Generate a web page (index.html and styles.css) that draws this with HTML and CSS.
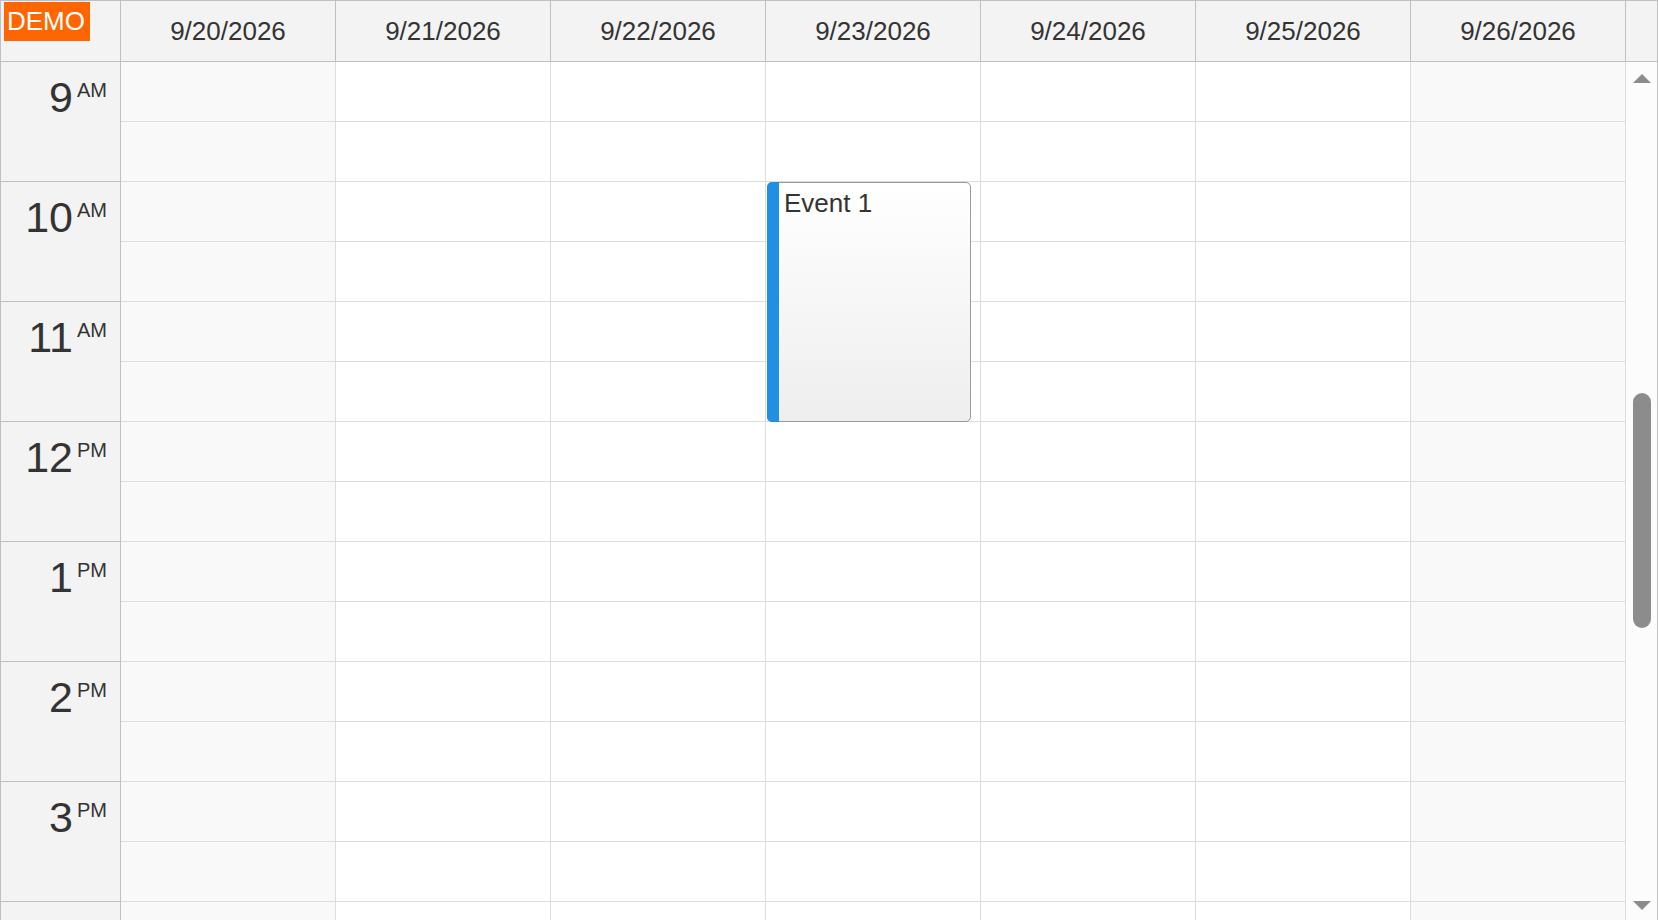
FILE: index.html
```html
<!DOCTYPE html>
<html>
<head>
<meta charset="utf-8">
<title>Calendar</title>
<link rel="stylesheet" href="styles.css">
</head>
<body>
<div class="cal">
  <div class="demo">DEMO</div>
  <div class="head">
    <div class="corner"></div>
    <div class="colhead">9/20/2026</div>
    <div class="colhead">9/21/2026</div>
    <div class="colhead">9/22/2026</div>
    <div class="colhead">9/23/2026</div>
    <div class="colhead">9/24/2026</div>
    <div class="colhead">9/25/2026</div>
    <div class="colhead">9/26/2026</div>
    <div class="headspacer"></div>
  </div>
  <div class="body">
    <div class="rowheaders">
      <div class="hour"><span class="num">9</span><span class="ampm">AM</span></div>
      <div class="hour"><span class="num">10</span><span class="ampm">AM</span></div>
      <div class="hour"><span class="num">11</span><span class="ampm">AM</span></div>
      <div class="hour"><span class="num">12</span><span class="ampm">PM</span></div>
      <div class="hour"><span class="num">1</span><span class="ampm">PM</span></div>
      <div class="hour"><span class="num">2</span><span class="ampm">PM</span></div>
      <div class="hour"><span class="num">3</span><span class="ampm">PM</span></div>
      <div class="hour"><span class="num">4</span><span class="ampm">PM</span></div>
      <div class="hour"><span class="num">5</span><span class="ampm">PM</span></div>
    </div>
    <div class="day weekend">
      <div class="cell"></div><div class="cell"></div><div class="cell"></div><div class="cell"></div><div class="cell"></div><div class="cell"></div><div class="cell"></div><div class="cell"></div><div class="cell"></div><div class="cell"></div><div class="cell"></div><div class="cell"></div><div class="cell"></div><div class="cell"></div><div class="cell"></div><div class="cell"></div><div class="cell"></div><div class="cell"></div>
    </div>
    <div class="day">
      <div class="cell"></div><div class="cell"></div><div class="cell"></div><div class="cell"></div><div class="cell"></div><div class="cell"></div><div class="cell"></div><div class="cell"></div><div class="cell"></div><div class="cell"></div><div class="cell"></div><div class="cell"></div><div class="cell"></div><div class="cell"></div><div class="cell"></div><div class="cell"></div><div class="cell"></div><div class="cell"></div>
    </div>
    <div class="day">
      <div class="cell"></div><div class="cell"></div><div class="cell"></div><div class="cell"></div><div class="cell"></div><div class="cell"></div><div class="cell"></div><div class="cell"></div><div class="cell"></div><div class="cell"></div><div class="cell"></div><div class="cell"></div><div class="cell"></div><div class="cell"></div><div class="cell"></div><div class="cell"></div><div class="cell"></div><div class="cell"></div>
    </div>
    <div class="day">
      <div class="cell"></div><div class="cell"></div><div class="cell"></div><div class="cell"></div><div class="cell"></div><div class="cell"></div><div class="cell"></div><div class="cell"></div><div class="cell"></div><div class="cell"></div><div class="cell"></div><div class="cell"></div><div class="cell"></div><div class="cell"></div><div class="cell"></div><div class="cell"></div><div class="cell"></div><div class="cell"></div>
      <div class="event">
        <div class="event-bar"></div>
        <div class="event-text">Event 1</div>
      </div>
    </div>
    <div class="day">
      <div class="cell"></div><div class="cell"></div><div class="cell"></div><div class="cell"></div><div class="cell"></div><div class="cell"></div><div class="cell"></div><div class="cell"></div><div class="cell"></div><div class="cell"></div><div class="cell"></div><div class="cell"></div><div class="cell"></div><div class="cell"></div><div class="cell"></div><div class="cell"></div><div class="cell"></div><div class="cell"></div>
    </div>
    <div class="day">
      <div class="cell"></div><div class="cell"></div><div class="cell"></div><div class="cell"></div><div class="cell"></div><div class="cell"></div><div class="cell"></div><div class="cell"></div><div class="cell"></div><div class="cell"></div><div class="cell"></div><div class="cell"></div><div class="cell"></div><div class="cell"></div><div class="cell"></div><div class="cell"></div><div class="cell"></div><div class="cell"></div>
    </div>
    <div class="day weekend">
      <div class="cell"></div><div class="cell"></div><div class="cell"></div><div class="cell"></div><div class="cell"></div><div class="cell"></div><div class="cell"></div><div class="cell"></div><div class="cell"></div><div class="cell"></div><div class="cell"></div><div class="cell"></div><div class="cell"></div><div class="cell"></div><div class="cell"></div><div class="cell"></div><div class="cell"></div><div class="cell"></div>
    </div>
    <div class="scrollbar">
      <div class="arrow-up"></div>
      <div class="thumb"></div>
      <div class="arrow-down"></div>
    </div>
  </div>
</div>
</body>
</html>
```

FILE: styles.css
```css
html, body {
  margin: 0;
  padding: 0;
  background: #ffffff;
  overflow: hidden;
}

body {
  width: 1658px;
  height: 920px;
  font-family: "Liberation Sans", Arial, sans-serif;
  color: #333333;
}

.cal {
  position: relative;
  box-sizing: border-box;
  width: 1658px;
  height: 940px;
  border: 1px solid #c0c0c0;
  border-bottom: none;
  overflow: hidden;
}

.demo {
  position: absolute;
  top: 1px;
  left: 3px;
  height: 39px;
  line-height: 39px;
  padding: 0 5px 0 3px;
  background: #ff6600;
  color: #ffffff;
  font-size: 26px;
  z-index: 2;
}

.head {
  display: grid;
  grid-template-columns: 120px repeat(7, 215px) 31px;
  height: 61px;
}

.corner,
.colhead,
.headspacer {
  box-sizing: border-box;
  height: 61px;
  background: #f3f3f3;
  border-bottom: 1px solid #c0c0c0;
}

.corner,
.colhead {
  border-right: 1px solid #c0c0c0;
}

.colhead {
  text-align: center;
  font-size: 26px;
  line-height: 60px;
  color: #333333;
}

.body {
  display: grid;
  grid-template-columns: 120px repeat(7, 215px) 31px;
  align-items: start;
  height: 878px;
  overflow: hidden;
}

.rowheaders {
  display: flex;
  flex-direction: column;
}

.hour {
  box-sizing: border-box;
  height: 120px;
  display: flex;
  justify-content: flex-end;
  align-items: flex-start;
  padding: 11px 13px 0 0;
  background: #f3f3f3;
  border-right: 1px solid #c0c0c0;
  border-bottom: 1px solid #c0c0c0;
  color: #333333;
}

.num {
  font-size: 43px;
  line-height: 49px;
}

.ampm {
  font-size: 20px;
  line-height: 23px;
  margin-top: 6px;
  margin-left: 4px;
}

.day {
  position: relative;
  display: flex;
  flex-direction: column;
  background: #ffffff;
}

.day.weekend {
  background: #f9f9f9;
}

.cell {
  box-sizing: border-box;
  height: 60px;
  border-right: 1px solid #dddddd;
  border-bottom: 1px solid #dddddd;
}

.event {
  position: absolute;
  top: 120px;
  left: 1px;
  box-sizing: border-box;
  width: 204px;
  height: 240px;
  border: 1px solid #999999;
  border-radius: 5px;
  background: linear-gradient(to bottom, #ffffff 0%, #eeeeee 100%);
  padding: 5px 0 0 16px;
}

.event-bar {
  position: absolute;
  top: -1px;
  left: -1px;
  bottom: -1px;
  width: 12px;
  background: #2190e3;
  border-radius: 5px 0 0 5px;
}

.event-text {
  font-size: 26px;
  line-height: 30px;
  color: #333333;
}

.scrollbar {
  box-sizing: border-box;
  height: 878px;
  background: #fcfcfc;
  display: flex;
  flex-direction: column;
  align-items: center;
  padding-top: 12px;
}

.arrow-up {
  width: 0;
  height: 0;
  border-left: 9px solid transparent;
  border-right: 9px solid transparent;
  border-bottom: 9px solid #8c8c8c;
}

.thumb {
  width: 18px;
  height: 235px;
  margin-top: 310px;
  border-radius: 9px;
  background: #8c8c8c;
}

.arrow-down {
  width: 0;
  height: 0;
  margin-top: 273px;
  border-left: 9px solid transparent;
  border-right: 9px solid transparent;
  border-top: 9px solid #8c8c8c;
}
```
